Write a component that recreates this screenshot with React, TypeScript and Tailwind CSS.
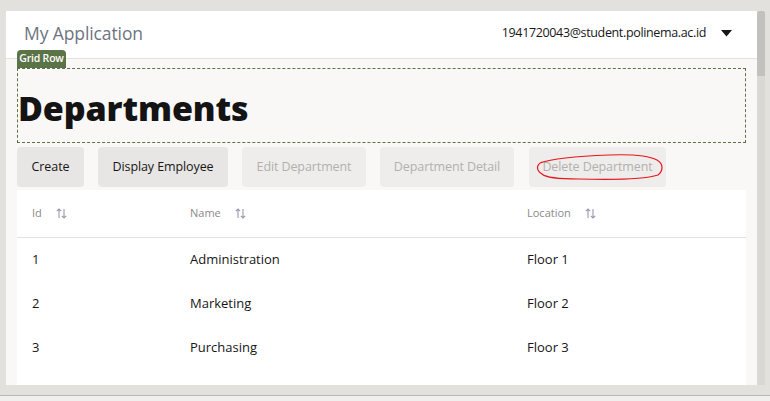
import React from "react";

const SortIcon = () => (
  <svg width="11" height="11" viewBox="0 0 11 11" fill="none" stroke="#9a9aae" strokeWidth="1.1">
    <path d="M3 10V1M0.8 3.2L3 1l2.2 2.2" />
    <path d="M8 1v9M5.8 7.8L8 10l2.2-2.2" />
  </svg>
);

const rows = [
  ["1", "Administration", "Floor 1"],
  ["2", "Marketing", "Floor 2"],
  ["3", "Purchasing", "Floor 3"],
];

export default function App() {
  const font = { fontFamily: '"Open Sans", "Noto Sans", sans-serif' };
  return (
    <div className="w-[770px] h-[401px] bg-[#e3e1dd] overflow-hidden flex flex-col" style={font}>
      <div className="flex pt-[11px] pl-[6px] h-[385px]">
        <div className="w-[751px] h-[374px] flex flex-col bg-[#f9f8f6] overflow-hidden">
          <div className="h-[48px] shrink-0 bg-white border-b border-[#e4e2df] flex items-center justify-between pl-[18px] pr-[25px]">
            <span className="text-[17.5px] text-[#6e7480] tracking-[-0.1px] mt-[-2px]">My Application</span>
            <div className="flex items-center gap-[15px] text-[12.5px] text-[#161616] mt-[-3px]">
              <span className="tracking-[-0.35px]">1941720043@student.polinema.ac.id</span>
              <svg width="11" height="7" viewBox="0 0 11 7"><path d="M0 0h11L5.5 6.5z" fill="#161616" /></svg>
            </div>
          </div>
          <div className="px-[11px] flex flex-col">
            <div className="relative mt-[9px] h-[75px] border border-dashed border-[#5b7447] flex items-center">
              <div className="absolute left-[-1px] top-[-19px] h-[18px] w-[49px] bg-[#5b7447] rounded-t-[4px] text-white text-[10.5px] font-semibold tracking-[-0.2px] flex items-center justify-center">
                Grid Row
              </div>
              <h1 className="text-[34px] font-extrabold text-[#141414] leading-none mt-[5px] tracking-[-0.1px]">Departments</h1>
            </div>
            <div className="relative flex mt-[4px] gap-[14px] text-[12.5px] tracking-[-0.1px]">
              <button className="w-[67px] h-[40px] rounded-[4px] bg-[#e8e6e4] text-[#161616]">Create</button>
              <button className="w-[130px] h-[40px] rounded-[4px] bg-[#e8e6e4] text-[#161616]">Display Employee</button>
              <button className="w-[124px] h-[40px] rounded-[4px] bg-[#efedeb] text-[#b2b0ae]">Edit Department</button>
              <button className="w-[134px] h-[40px] rounded-[4px] bg-[#efedeb] text-[#b2b0ae]">Department Detail</button>
              <button className="w-[137px] h-[40px] ml-[1px] rounded-[4px] bg-[#efedeb] text-[#b2b0ae]">Delete Department</button>
              <svg className="absolute left-[517px] top-[4px]" width="135" height="34" viewBox="0 0 135 34" fill="none">
                <path d="M6 12 C 20 7, 50 5, 75 4 C 100 3, 115 5, 123 9 C 130 13, 129 20, 124 24 C 108 29, 80 29, 45 28 C 25 28, 12 27, 8 23 C 2 19, 2 14, 8 11" stroke="#e8141c" strokeWidth="1.2" />
              </svg>
            </div>
            <div className="mt-[3px] bg-white h-[200px]">
              <div className="grid grid-cols-[158px_337px_1fr] h-[48px] border-b border-[#e2e1df] items-center text-[11px] text-[#8a8a8a]">
                <div className="pl-[15px] flex items-center gap-[14px]"><span>Id</span><SortIcon /></div>
                <div className="pl-[15px] flex items-center gap-[14px]"><span>Name</span><SortIcon /></div>
                <div className="pl-[15px] flex items-center gap-[14px]"><span>Location</span><SortIcon /></div>
              </div>
              {rows.map((r) => (
                <div key={r[0]} className="grid grid-cols-[158px_337px_1fr] h-[44px] items-center text-[13px] text-[#161616]">
                  <div className="pl-[15px]">{r[0]}</div>
                  <div className="pl-[15px]">{r[1]}</div>
                  <div className="pl-[15px]">{r[2]}</div>
                </div>
              ))}
            </div>
          </div>
        </div>
        <div className="w-[8px] h-[374px] bg-[#dad8d4] flex flex-col">
          <div className="h-[65px] w-[8px] bg-[#c3c1bd] rounded-t-[3px]" />
        </div>
      </div>
      <div className="h-[10px]" />
      <div className="h-[1px] bg-[#b9b7b3]" />
      <div className="flex-1 bg-[#f0efed]" />
    </div>
  );
}
